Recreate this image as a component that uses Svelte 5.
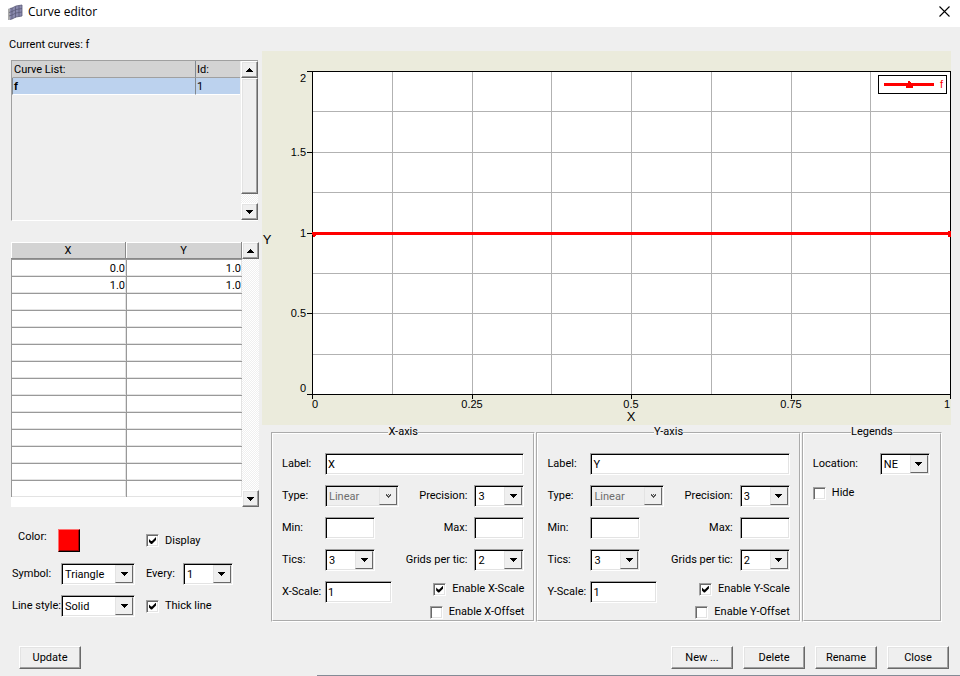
<script lang="ts">
  type Axis = {
    name: string;
    label: string;
    type: string;
    precision: string;
    min: string;
    max: string;
    tics: string;
    grids: string;
    scale: string;
    scaleOn: boolean;
    offsetOn: boolean;
  };

  const makeAxis = (name: string): Axis => ({
    name,
    label: name,
    type: 'Linear',
    precision: '3',
    min: '',
    max: '',
    tics: '3',
    grids: '2',
    scale: '1',
    scaleOn: true,
    offsetOn: false
  });

  let axes = $state([makeAxis('X'), makeAxis('Y')]);
  let curve = $state({ symbol: 'Triangle', every: '1', line: 'Solid', display: true, thick: true });
  let legend = $state({ location: 'NE', hide: false });

  const points = [['0.0', '1.0'], ['1.0', '1.0']];
  const rows = Array.from({ length: 14 }, (_, i) => points[i] ?? ['', '']);

  const numbers = ['1', '2', '3', '4', '5'];
  const symbols = ['Triangle', 'Square', 'Circle', 'None'];
  const lines = ['Solid', 'Dash', 'Dot'];
  const corners = ['NE', 'NW', 'SE', 'SW'];

  // plot area inside the chart
  const plot = { x: 50, y: 20, w: 638, h: 323 };
  const steps = [1, 2, 3, 4, 5, 6, 7];
  const gx = (i: number) => Math.round(plot.x + (plot.w * i) / 8) + 0.5;
  const gy = (i: number) => Math.round(plot.y + (plot.h * i) / 8) + 0.5;
  const xTics = [
    { at: 0, x: 53, text: '0' },
    { at: 2, x: 210, text: '0.25' },
    { at: 4, x: 369, text: '0.5' },
    { at: 6, x: 529, text: '0.75' },
    { at: 8, x: 685, text: '1' }
  ];
  const yTics = [
    { at: 0, y: 31, text: '2' },
    { at: 2, y: 105, text: '1.5' },
    { at: 4, y: 186, text: '1' },
    { at: 6, y: 266, text: '0.5' },
    { at: 8, y: 341, text: '0' }
  ];
</script>

{#snippet arrow(up = false)}
  <svg width="7" height="4" viewBox="0 0 7 4" aria-hidden="true">
    <path d={up ? 'M3 0h1v1h1v1h1v1h1v1H0V3h1V2h1V1h1z' : 'M0 0h7v1H6v1H5v1H4v1H3V3H2V2H1V1H0z'} />
  </svg>
{/snippet}

{#snippet combo(id: string, obj: any, key: string, options: string[], size = '', disabled = false)}
  <span class="combo {size}" class:disabled>
    <select {id} bind:value={obj[key]} {disabled}>
      {#each options as option}
        <option>{option}</option>
      {/each}
    </select>
    <span class="drop">
      {#if disabled}
        <svg width="5" height="5" viewBox="0 0 5 5" aria-hidden="true">
          <path d="M0 0h1v1h1v1h1V1h1V0h1v2H4v1H3v1H2V3H1V2H0zM2 0h1v1H2z" fill="#555" />
        </svg>
      {:else}
        {@render arrow()}
      {/if}
    </span>
  </span>
{/snippet}

{#snippet scrollbar(thumb: boolean)}
  <div class="scroll">
    <button class="step" aria-label="Scroll up">{@render arrow(true)}</button>
    <div class="trough">
      {#if thumb}<div class="thumb"></div>{/if}
    </div>
    <button class="step" aria-label="Scroll down">{@render arrow()}</button>
  </div>
{/snippet}

<div class="window">
  <header>
    <svg width="16" height="18" viewBox="0 0 16 18" aria-hidden="true">
      <path d="M1 6l4-1 4-2 6-1v11l-6 1-4 2-4 1z" fill="#8a8aae" />
      <path d="M1 6l2-.5v11L1 17z" fill="#aaa" />
      <path d="M3 5.500l2-.5 4-2 6-1v11l-6 1-4 2-2 .5M2 9.500l3-1 4-2 6-1M2 13l3-1 4-2 6-1M5 5v11M8.500 3.500v11M12 2.500v11" fill="none" stroke="#5c5c78" stroke-width=".8" />
    </svg>
    <h1>Curve editor</h1>
    <button class="exit" aria-label="Close window">
      <svg width="11" height="11" viewBox="0 0 11 11"><path d="M.5.5l10 10M10.500.5l-10 10" stroke="#000" stroke-width="1.100" /></svg>
    </button>
  </header>

  <main>
    <section class="side">
      <p>Current curves: f</p>

      <div class="list">
        <table>
          <thead>
            <tr><th>Curve List:</th><th class="id">Id:</th></tr>
          </thead>
          <tbody>
            <tr><td><b>f</b></td><td>1</td></tr>
          </tbody>
        </table>
        {@render scrollbar(true)}
      </div>

      <div class="values">
        <table>
          <thead>
            <tr><th>X</th><th>Y</th></tr>
          </thead>
          <tbody>
            {#each rows as [x, y]}
              <tr><td>{x}</td><td>{y}</td></tr>
            {/each}
          </tbody>
        </table>
        {@render scrollbar(false)}
      </div>

      <div class="style">
        <label class="color" for="color">Color:</label>
        <button id="color" class="swatch" aria-label="Curve color"></button>
        <label class="check"><input type="checkbox" bind:checked={curve.display} />Display</label>

        <label for="symbol">Symbol:</label>
        {@render combo('symbol', curve, 'symbol', symbols, 'wide')}
        <div class="every">
          <label for="every">Every:</label>
          {@render combo('every', curve, 'every', numbers)}
        </div>

        <label for="line">Line style:</label>
        {@render combo('line', curve, 'line', lines, 'wide')}
        <label class="check"><input type="checkbox" bind:checked={curve.thick} />Thick line</label>
      </div>
    </section>

    <section class="content">
      <svg class="chart" viewBox="0 0 689 374" role="img" aria-label="Curve f">
        <rect width="689" height="374" fill="#ebebdc" />
        <rect x="50.5" y="20.5" width="638" height="323" fill="#fff" />
        <g stroke="#b2b2b2">
          {#each steps as i}
            <path d="M{gx(i)} 21V343M51 {gy(i)}H688" />
          {/each}
        </g>
        <rect x="50.5" y="20.5" width="638" height="323" fill="none" stroke="#000" />
        {#each xTics as tic}
          <path d="M{gx(tic.at)} 343v5" stroke="#000" />
          <text x={tic.x} y="357" text-anchor="middle">{tic.text}</text>
        {/each}
        {#each yTics as tic}
          <path d="M45 {gy(tic.at)}h5" stroke="#000" />
          <text x="44" y={tic.y} text-anchor="end">{tic.text}</text>
        {/each}
        <text class="title" x="369" y="370" text-anchor="middle">{axes[0].label}</text>
        <text class="title" x="5" y="193" text-anchor="middle">{axes[1].label}</text>
        <path d="M50 181h639v3H50zM51 184h3v1h-1v1h-2zM686 180h3v6h-3z" fill="#f00" />
        {#if !legend.hide}
          <rect x="616.5" y="24.500" width="68" height="18" fill="#fff" stroke="#000" />
          <path d="M622 32h50v3h-50zM646 30h2v1h1v3h2v3h-7v-2h2z" fill="#f00" />
          <text class="key" x="678" y="37">f</text>
        {/if}
      </svg>

      <div class="groups">
        {#each axes as axis}
          <fieldset>
            <legend>{axis.name}-axis</legend>
            <div class="row">
              <label for="{axis.name}-label">Label:</label>
              <input id="{axis.name}-label" class="grow" type="text" bind:value={axis.label} />
            </div>
            <div class="row">
              <label for="{axis.name}-type">Type:</label>
              {@render combo(axis.name + '-type', axis, 'type', ['Linear', 'Log'], 'wide', true)}
              <label class="second" for="{axis.name}-precision">Precision:</label>
              {@render combo(axis.name + '-precision', axis, 'precision', numbers)}
            </div>
            <div class="row">
              <label for="{axis.name}-min">Min:</label>
              <input id="{axis.name}-min" type="text" bind:value={axis.min} />
              <label class="second" for="{axis.name}-max">Max:</label>
              <input id="{axis.name}-max" type="text" bind:value={axis.max} />
            </div>
            <div class="row">
              <label for="{axis.name}-tics">Tics:</label>
              {@render combo(axis.name + '-tics', axis, 'tics', numbers)}
              <label class="second" for="{axis.name}-grids">Grids per tic:</label>
              {@render combo(axis.name + '-grids', axis, 'grids', numbers)}
            </div>
            <div class="row last">
              <label for="{axis.name}-scale">{axis.name}-Scale:</label>
              <input id="{axis.name}-scale" class="scale" type="text" bind:value={axis.scale} />
              <div class="checks">
                <label class="check"><input type="checkbox" bind:checked={axis.scaleOn} />Enable {axis.name}-Scale</label>
                <label class="check"><input type="checkbox" bind:checked={axis.offsetOn} />Enable {axis.name}-Offset</label>
              </div>
            </div>
          </fieldset>
        {/each}

        <fieldset>
          <legend>Legends</legend>
          <div class="row">
            <label class="place" for="location">Location:</label>
            {@render combo('location', legend, 'location', corners)}
          </div>
          <label class="check"><input type="checkbox" bind:checked={legend.hide} />Hide</label>
        </fieldset>
      </div>
    </section>
  </main>

  <footer>
    <button class="push update">Update</button>
    <button class="push">New ...</button>
    <button class="push">Delete</button>
    <button class="push">Rename</button>
    <button class="push">Close</button>
  </footer>
  <div class="edge"></div>
</div>

<style>
  :global(body) {
    margin: 0;
    background: #efefef;
  }

  .window, button, input, select {
    font-family: Roboto, "Liberation Sans", Arial, sans-serif;
    font-size: 11px;
    color: #000;
  }

  .window {
    display: flex;
    flex-direction: column;
    min-height: 100vh;
    line-height: 16px;
    background: #efefef;
  }

  .window * {
    box-sizing: border-box;
  }

  header {
    display: flex;
    align-items: center;
    height: 27px;
    padding: 0 9px 4px 7px;
    background: #fff;
  }

  h1 {
    flex-grow: 1;
    margin: 0 0 0 5px;
    font: 12px/18px "Open Sans", "Noto Sans", sans-serif;
  }

  .exit {
    display: flex;
    padding: 1px;
    border: none;
    background: none;
  }

  main {
    display: grid;
    grid-template-columns: 262px 1fr;
    padding-right: 9px;
  }

  .side {
    padding: 10px 3px 0 11px;
  }

  p {
    margin: 0 0 7px -2px;
  }

  .list, .values {
    display: flex;
    justify-content: space-between;
  }

  .list {
    height: 161px;
    margin-right: 1px;
    border: 1px solid #a0a0a0;
    border-right: none;
    border-bottom-color: #fff;
  }

  .list table {
    width: 228px;
    height: 34px;
  }

  table {
    border-collapse: separate;
    border-spacing: 0;
    table-layout: fixed;
  }

  th, td {
    height: 17px;
    padding: 0 1px;
    line-height: 15px;
    font-weight: normal;
    text-align: left;
  }

  th {
    background: #d3d3d3;
  }

  .id {
    width: 45px;
  }

  .list th, .list td {
    border-bottom: 1px solid #fff;
    border-left: 1px solid #808890;
  }

  .list th:first-child {
    border-left-color: #d3d3d3;
  }

  .list th {
    border-bottom-color: #a0a0a0;
  }

  .list td {
    background: #bcd2ee;
  }

  .values {
    height: 265px;
    margin-top: 21px;
    background: #fff;
  }

  .values table {
    width: 231px;
    height: 255px;
  }

  .values th {
    border-bottom: 1px solid #888;
    border-right: 1px solid #888;
    box-shadow: inset 1px 1px #fff;
    text-align: center;
  }

  .values th:first-child {
    width: 115px;
  }

  .values td {
    border-top: 1px solid #999;
    border-left: 1px solid #999;
    box-shadow: inset -1px -1px #e3e3e3;
    text-align: right;
  }

  .scroll {
    display: flex;
    flex-direction: column;
    width: 17px;
  }

  .step {
    display: flex;
    align-items: center;
    justify-content: center;
    flex-shrink: 0;
    width: 17px;
    height: 17px;
    padding: 0;
  }

  .trough {
    flex-grow: 1;
    background: repeating-conic-gradient(#fff 0 25%, #efefef 0 50%) 0 0 / 2px 2px;
  }

  .thumb {
    height: 93%;
  }

  .step, .thumb, .push {
    border: 1px solid;
    border-color: #fff #696969 #696969 #fff;
    background: #efefef;
    box-shadow: inset -1px -1px #a0a0a0, inset 1px 1px #e3e3e3;
  }

  .style {
    display: grid;
    grid-template: 25px 22px 22px / 50px 74px 1fr;
    row-gap: 10px;
    align-items: center;
    margin-top: 21px;
  }

  .style > label {
    padding-left: 1px;
    white-space: nowrap;
  }

  .style > .color {
    padding: 0 0 8px 7px;
  }

  .style > .check {
    padding-left: 11px;
  }

  .every {
    display: flex;
    align-items: center;
    gap: 8px;
    padding-left: 11px;
  }

  .swatch {
    justify-self: start;
    width: 22px;
    height: 23px;
    margin-left: -3px;
    border: 1px solid;
    border-color: #ff7070 #000 #000 #ff7070;
    background: #f00;
    box-shadow: inset -1px -1px #a00000;
  }

  .content {
    padding-top: 24px;
  }

  .chart {
    display: block;
    width: 100%;
  }

  .chart text {
    font: 11px "Liberation Sans", Arial, sans-serif;
  }

  .chart .title {
    font-size: 13px;
  }

  .chart .key {
    fill: #f00;
  }

  .groups {
    display: grid;
    grid-template-columns: 264fr 264fr 140fr;
    gap: 1px;
    padding: 0 9px;
  }

  fieldset {
    display: flex;
    flex-direction: column;
    gap: 10px;
    min-width: 0;
    margin: 0;
    padding: 12px 9px 0;
    border: 2px groove #fff;
  }

  legend {
    margin: 0 auto;
    padding: 0 0 2px;
    line-height: 14px;
  }

  .row {
    display: flex;
    align-items: center;
  }

  .row > label {
    width: 43px;
    white-space: nowrap;
  }

  .row > .second {
    width: auto;
    margin: 0 7px 0 auto;
  }

  .row > .place {
    width: 67px;
  }

  .last {
    align-items: flex-start;
  }

  .last > label {
    line-height: 22px;
  }

  .checks {
    display: flex;
    flex-direction: column;
    align-items: flex-end;
    gap: 7px;
    margin-left: auto;
  }

  .check {
    display: flex;
    align-items: center;
    gap: 6px;
    white-space: nowrap;
  }

  input, .combo {
    border: 1px solid;
    border-color: #a0a0a0 #fff #fff #a0a0a0;
    background: #fff;
    box-shadow: inset 1px 1px #000, inset -1px -1px #e3e3e3;
  }

  input[type="text"] {
    width: 50px;
    height: 22px;
    padding: 1px 2px;
  }

  input.grow {
    width: 0;
    flex-grow: 1;
  }

  input.scale {
    width: 67px;
  }

  input[type="checkbox"] {
    appearance: none;
    width: 13px;
    height: 13px;
    margin: 0;
    box-shadow: inset 1px 1px #696969, inset -1px -1px #e3e3e3;
  }

  input[type="checkbox"]:checked::before {
    content: "";
    display: block;
    width: 7px;
    height: 7px;
    margin: 2px;
    background: #000;
    clip-path: polygon(0 2px, 2px 4px, 3px 4px, 7px 0, 7px 3px, 3px 7px, 2px 7px, 0 5px);
  }

  .combo {
    display: flex;
    width: 50px;
    height: 22px;
    padding: 1px;
  }

  .combo.wide {
    width: 74px;
  }

  .combo.disabled {
    background: #efefef;
  }

  select {
    appearance: none;
    flex: 1;
    min-width: 0;
    padding: 0 0 0 2px;
    border: none;
    background: none;
  }

  select:disabled {
    color: #6d6d6d;
    opacity: 1;
  }

  .drop {
    display: flex;
    align-items: center;
    justify-content: center;
    width: 18px;
    border: 1px solid;
    border-color: #e3e3e3 #696969 #696969 #e3e3e3;
    background: #efefef;
    pointer-events: none;
  }

  footer {
    display: flex;
    gap: 10px;
    margin-top: 24px;
    padding: 0 11px 0 19px;
  }

  .push {
    width: 62px;
    height: 23px;
    padding: 0;
  }

  .update {
    margin-right: auto;
  }

  .edge {
    height: 1px;
    margin: auto 0 0 33%;
    background: #848b96;
  }
</style>
